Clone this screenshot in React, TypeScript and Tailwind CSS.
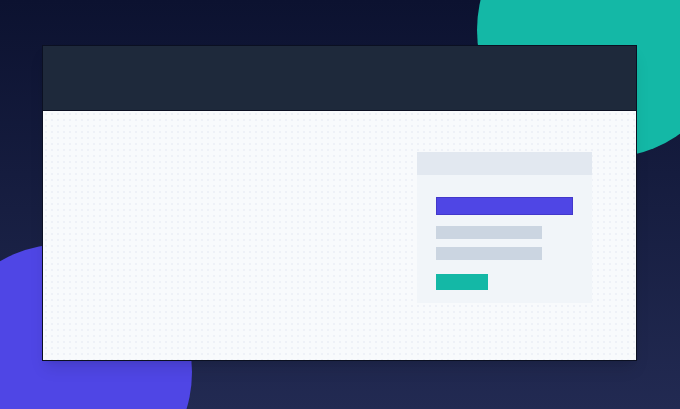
export default function App() {
  return (
    <div className="relative w-[680px] h-[409px] overflow-hidden bg-gradient-to-b from-[#0c1230] to-[#222a52]">
      {/* decorative blobs */}
      <div className="absolute left-[477px] top-[-98px] w-[256px] h-[256px] rounded-full bg-[#14b8a6]" />
      <div className="absolute left-[-64px] top-[244px] w-[256px] h-[256px] rounded-full bg-[#4f46e5]" />

      {/* browser window */}
      <div className="relative ml-[42px] mt-[45px] w-[595px] h-[316px] flex flex-col border border-[#0b1022] shadow-lg">
        <div className="h-[65px] shrink-0 bg-[#1e293b] border-b border-[#0b1022]" />
        <div className="flex-1 flex justify-end items-start pt-[41px] pr-[44px] bg-[#f8fafc] bg-[radial-gradient(#eef1f7_1px,transparent_1px)] bg-[size:6px_6px]">
          <div className="w-[175px] h-[151px] flex flex-col bg-[#f1f5f9]">
            <div className="h-[23px] bg-[#e2e8f0]" />
            <div className="flex flex-col pl-[19px] pt-[22px]">
              <div className="w-[137px] h-[18px] bg-[#4f46e5] border border-[#4338ca]" />
              <div className="mt-[11px] w-[106px] h-[13px] bg-[#cbd5e1]" />
              <div className="mt-[8px] w-[106px] h-[13px] bg-[#cbd5e1]" />
              <div className="mt-[14px] w-[52px] h-[16px] bg-[#14b8a6]" />
            </div>
          </div>
        </div>
      </div>
    </div>
  );
}
